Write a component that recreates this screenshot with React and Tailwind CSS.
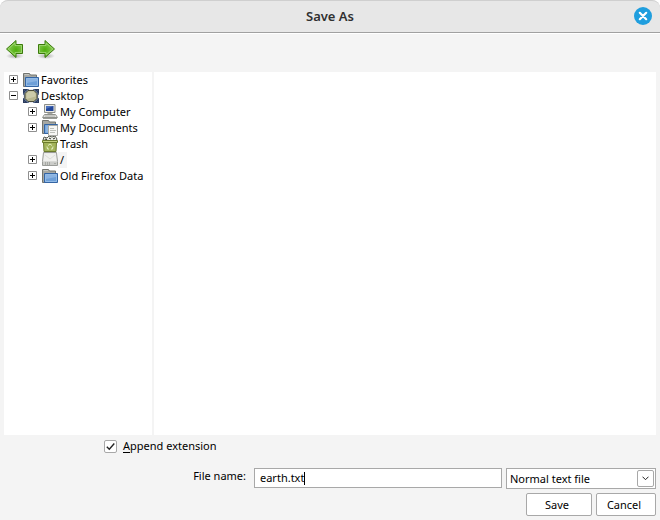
import React, { useState } from 'react';

const FolderIcon = () => (
    <svg viewBox="0 0 16 16" className="w-4 h-4 shrink-0">
        <path d="M.5 14.500V1.500h6l1 1.500h6v11.500z" fill="#a6a8a3" stroke="#72746f" />
        <path d="M1.500 2.500h4.500" stroke="#c4c6c1" />
        <path d="M2.500 5.500h13v9h-13z" fill="#729fcf" stroke="#3465a4" />
        <path d="M3.500 6.500h11v7h-11z" fill="#6d9fd8" stroke="#93bbe6" />
        <path d="M4 7h10v2L4 11z" fill="#8ab3e2" />
    </svg>
);

const DesktopIcon = () => (
    <svg viewBox="0 0 16 16" className="w-4 h-4 shrink-0">
        <path d="M0 1h16v14H0z" fill="#6f83a6" />
        <path d="M0 1h5L0 6zM16 1v5l-5-5zM0 15v-5l5 5zM16 15h-5l5-5z" fill="#2c3d5e" />
        <path d="M6 1h4v1H6zM6 14h4v1H6zM0 7h1v3H0zM15 7h1v3h-1z" fill="#e6e8ec" />
        <path d="M1.500 2.500l2 2M14.500 2.500l-2 2M1.500 13.500l2-2M14.500 13.500l-2-2" stroke="#5c7198" />
        <path d="M5 2.500h6L14 5.500v5l-3 3H5l-3-3v-5z" fill="#b9b890" stroke="#4a4b38" />
        <path d="M5.500 3.500h5l2 2.500v2.500L3.500 11V6z" fill="#cccbaa" />
    </svg>
);

const ComputerIcon = () => (
    <svg viewBox="0 0 16 16" className="w-4 h-4 shrink-0">
        <path d="M2.500.5h10.500v8H2.500z" fill="#e9e9e6" stroke="#8c8e89" />
        <path d="M4 2h7.500v5H4z" fill="#23479a" />
        <path d="M4 2h7.500L4 5z" fill="#4a70bd" />
        <path d="M5.500 9h5v2h-5z" fill="#a5a7a2" />
        <path d="M2.500 10.500h11l2 3H.5z" fill="#e4e4e1" stroke="#90928d" />
        <path d="M3 12h10" stroke="#aaaca7" />
        <path d="M1 14.500h14" stroke="#999b96" />
    </svg>
);

const DocumentsIcon = () => (
    <svg viewBox="0 0 16 16" className="w-4 h-4 shrink-0">
        <path d="M.5 13.500v-13h6l1 1.500h6v11.500z" fill="#a6a8a3" stroke="#72746f" />
        <path d="M2.500 4.500h13v9h-13z" fill="#6d9fd8" stroke="#3465a4" />
        <path d="M3.500 5.500h3v7h-3z" fill="#8ab3e2" />
        <path d="M6.500 5.500h9v10h-9z" fill="#f7f7f5" stroke="#a9aba6" />
        <path d="M8 8.500h4M8 10.500h6M8 12.500h5" stroke="#bdc0ba" />
    </svg>
);

const TrashIcon = () => (
    <svg viewBox="0 0 16 16" className="w-4 h-4 shrink-0">
        <path d="M1 4l1-3 3 1 2-2 3 1 3-1 2 3-1 2z" fill="#eceee8" stroke="#5a5d54" />
        <path d="M3 3l2 .5M7 2l2 1M11 3l2-1" fill="none" stroke="#2e302b" />
        <path d="M1.500 6.500h13l-.5 9H2z" fill="#a3b45a" stroke="#6b7a2c" />
        <path d="M.5 4.500h15v2H.5z" fill="#c3d07e" stroke="#6b7a2c" />
        <path d="M6 9.500l2-1.500 2 1.500M11 10.500l-.5 2.500H9M7 13H5.500L5 10.500" fill="none" stroke="#e6efc4" />
    </svg>
);

const DriveIcon = () => (
    <svg viewBox="0 0 16 16" className="w-4 h-4 shrink-0">
        <path d="M1.500.5h13l1 9v4H.5v-4z" fill="#e6e6e4" stroke="#9a9c98" />
        <path d="M2.500 1.500h11l1 7.500h-13z" fill="#f0f0ee" />
        <path d="M3 3l5 4 5-4" fill="none" stroke="#dcddd9" />
        <path d="M1 9.500h14v3.500H1z" fill="#cbccc9" />
        <path d="M3.500 10v3M5.500 10v3M7.500 10v3M12 11.500h2" stroke="#a8aaa5" />
    </svg>
);

const ArrowIcon = ({ flipped }) => (
    <svg viewBox="0 0 20 20" className={flipped ? 'w-5 h-5 -scale-x-100' : 'w-5 h-5'}>
        <defs>
            <radialGradient id="arrowFill" cx="0.6" cy="0.55" r="0.6">
                <stop offset="0" stopColor="#4fae0c" />
                <stop offset="1" stopColor="#8fcf5c" />
            </radialGradient>
            <radialGradient id="arrowShadow">
                <stop offset="0" stopColor="#777" stopOpacity="0.6" />
                <stop offset="1" stopColor="#777" stopOpacity="0" />
            </radialGradient>
        </defs>
        <ellipse cx="10" cy="17" rx="9" ry="3" fill="url(#arrowShadow)" />
        <path d="M1.500 10l9.500-8.500v4h6.500v9H11v4z" fill="url(#arrowFill)" stroke="#3b7a0a" />
        <path d="M3.200 10L10 4v2.500h6.500v7H10V16z" fill="none" stroke="#b2e08c" strokeOpacity="0.6" />
    </svg>
);

const tree = [
    { name: 'Favorites', icon: FolderIcon, open: false },
    {
        name: 'Desktop',
        icon: DesktopIcon,
        open: true,
        children: [
            { name: 'My Computer', icon: ComputerIcon, open: false },
            { name: 'My Documents', icon: DocumentsIcon, open: false },
            { name: 'Trash', icon: TrashIcon },
            { name: '/', icon: DriveIcon, open: false, current: true },
            { name: 'Old Firefox Data', icon: FolderIcon, open: false },
        ],
    },
];

const TreeNode = ({ node }) => {
    const Icon = node.icon;
    return (
        <li>
            <div className="flex items-start h-4">
                {node.open === undefined ? (
                    <span className="w-[9px] mr-[5px]" />
                ) : (
                    <button type="button" aria-label={`Toggle ${node.name}`} className="w-[9px] h-[9px] mt-[3px] mr-[5px] bg-white shrink-0">
                        <svg viewBox="0 0 9 9" className="w-[9px] h-[9px]">
                            <path d="M.5.5h8v8h-8z" fill="none" stroke="#8f8f8f" />
                            <path d={node.open ? 'M2 4.500h5' : 'M2 4.500h5M4.500 2v5'} stroke="#000" />
                        </svg>
                    </button>
                )}
                <Icon />
                <span className={`pl-[2px] pr-[3px] leading-4 whitespace-nowrap ${node.current ? 'bg-[#f4f4f4]' : ''}`}>
                    {node.name}
                </span>
            </div>
            {node.children && (
                <ul className="pl-[19px]">
                    {node.children.map((child) => (
                        <TreeNode key={child.name} node={child} />
                    ))}
                </ul>
            )}
        </li>
    );
};

const SaveAsDialog = () => {
    const [fileName, setFileName] = useState('earth.txt');
    const [append, setAppend] = useState(true);

    return (
        <div className="bg-white min-h-screen flex">
            <div className="flex-1 flex flex-col bg-[#f4f4f4] rounded-t-lg text-[11px] leading-4 text-black font-['Noto_Sans',sans-serif]">
                {/* Title bar */}
                <header className="grid grid-cols-[1fr_auto_1fr] items-center h-[33px] px-2 pb-px bg-[#e7e7e7] border-t border-t-[#cfcfcf] border-b border-b-[#a0a0a0] rounded-t-lg">
                    <h1 className="col-start-2 text-[13px] font-semibold text-[#303030]">Save As</h1>
                    <button type="button" aria-label="Close" className="justify-self-end w-[18px] h-[18px] rounded-full bg-[#1f9ede]">
                        <svg viewBox="0 0 18 18" className="w-[18px] h-[18px]">
                            <path d="M5.800 5.800l6.400 6.400M12.200 5.800l-6.400 6.400" stroke="#fff" strokeWidth="2.200" strokeLinecap="round" />
                        </svg>
                    </button>
                </header>

                {/* Navigation */}
                <nav className="flex items-start gap-[11px] h-[39px] pt-[5px] px-[5px] border-t border-white">
                    <button type="button" aria-label="Back"><ArrowIcon /></button>
                    <button type="button" aria-label="Forward"><ArrowIcon flipped /></button>
                </nav>

                {/* Folder tree and file list */}
                <main className="flex-1 flex gap-[2px] mx-1">
                    <ul className="w-[148px] bg-white pl-[5px]">
                        {tree.map((node) => (
                            <TreeNode key={node.name} node={node} />
                        ))}
                    </ul>
                    <section className="flex-1 bg-white" aria-label="Files" />
                </main>

                <form className="flex flex-col px-1 pt-[3px] pb-1" onSubmit={(e) => e.preventDefault()}>
                    <label className="flex items-center gap-[6px] self-start ml-[100px]">
                        <span className="grid">
                            <input
                                type="checkbox"
                                checked={append}
                                onChange={(e) => setAppend(e.target.checked)}
                                className="col-start-1 row-start-1 appearance-none w-[13px] h-[13px] bg-white border border-[#a8a8a8] rounded-xs"
                            />
                            {append && (
                                <svg viewBox="0 0 13 13" className="col-start-1 row-start-1 w-[13px] h-[13px] pointer-events-none">
                                    <path d="M2.800 6.800l2.500 2.500 5-5.800" fill="none" stroke="#222" strokeWidth="1.400" />
                                </svg>
                            )}
                        </span>
                        <span><span className="underline underline-offset-2">A</span>ppend extension</span>
                    </label>

                    <div className="flex items-start mt-[14px]">
                        <label htmlFor="filename" className="w-[242px] text-right">File name:</label>
                        <div className="flex-1 flex items-center h-5 ml-2 mr-1 pl-[5px] bg-white border border-[#a8a8a8]">
                            <input
                                id="filename"
                                type="text"
                                value={fileName}
                                onChange={(e) => setFileName(e.target.value)}
                                className="[field-sizing:content] outline-none caret-transparent"
                            />
                            <span className="w-px h-[13px] bg-black" />
                        </div>
                        <div className="relative w-[150px]">
                            <select
                                aria-label="File type"
                                className="appearance-none w-full h-[21px] pl-[3px] pr-6 bg-white border border-[#a8a8a8]"
                            >
                                <option>Normal text file</option>
                            </select>
                            <span className="absolute right-[2px] inset-y-[2px] w-[17px] border border-[#a8a8a8] rounded-xs bg-white pointer-events-none flex items-center justify-center">
                                <svg viewBox="0 0 7 5" className="w-[7px] h-[5px]">
                                    <path d="M.5.700l3 3 3-3" fill="none" stroke="#222" />
                                </svg>
                            </span>
                        </div>
                    </div>

                    <div className="flex justify-end gap-1 mt-1">
                        <button type="submit" className="w-[66px] h-[23px] pr-1 bg-white border border-[#a8a8a8] rounded-xs">Save</button>
                        <button type="button" className="w-[60px] h-[23px] pr-1 bg-white border border-[#a8a8a8] rounded-xs">Cancel</button>
                    </div>
                </form>
            </div>
        </div>
    );
};

export default SaveAsDialog;
